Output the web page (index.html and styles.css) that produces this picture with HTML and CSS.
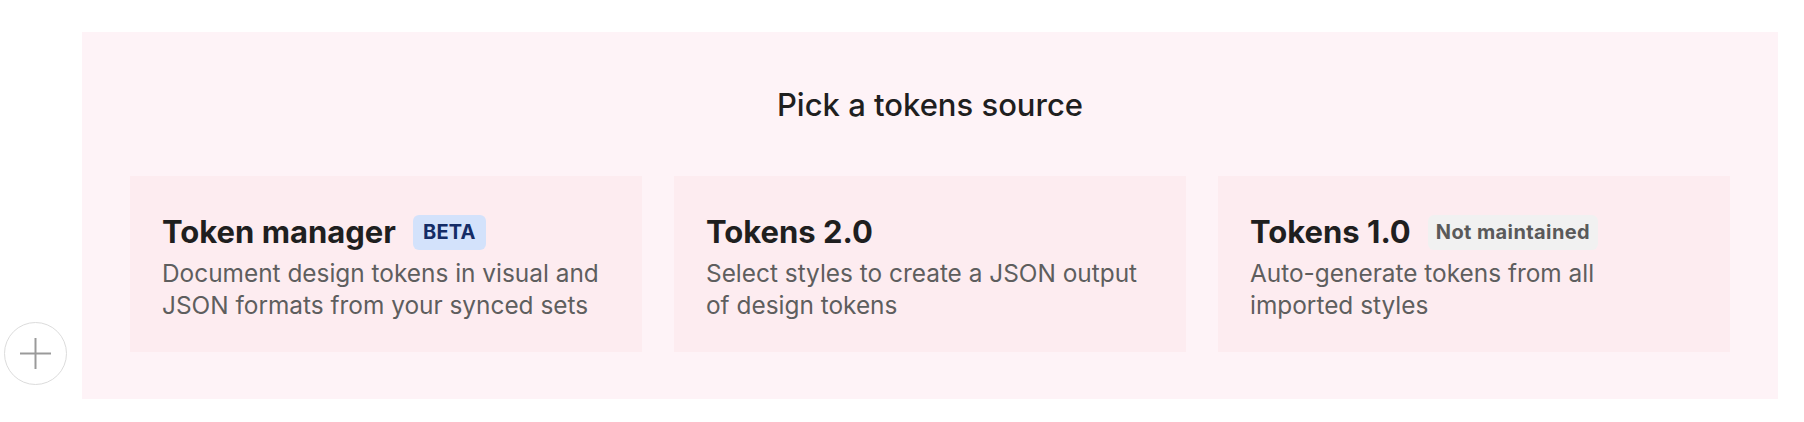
FILE: index.html
```html
<!DOCTYPE html>
<html lang="en">
<head>
    <meta charset="UTF-8">
    <meta name="viewport" content="width=device-width, initial-scale=1.0">
    <title>Pick a tokens source</title>
    <link rel="stylesheet" href="styles.css">
</head>
<body>
    <div class="page">
        <div class="gutter">
            <button class="add-block" title="Add block">
                <svg width="31" height="31" viewBox="0 0 31 31">
                    <line x1="15.5" y1="0" x2="15.5" y2="31" stroke="#9a9a9a" stroke-width="2"/>
                    <line x1="0" y1="15.5" x2="31" y2="15.5" stroke="#9a9a9a" stroke-width="2"/>
                </svg>
            </button>
        </div>

        <section class="picker">
            <h2>Pick a tokens source</h2>

            <div class="sources">
                <div class="source-card">
                    <div class="source-title">
                        <span>Token manager</span>
                        <span class="badge beta">BETA</span>
                    </div>
                    <p>Document design tokens in visual and JSON formats from your synced sets</p>
                </div>

                <div class="source-card">
                    <div class="source-title">
                        <span>Tokens 2.0</span>
                    </div>
                    <p>Select styles to create a JSON output of design tokens</p>
                </div>

                <div class="source-card">
                    <div class="source-title">
                        <span>Tokens 1.0</span>
                        <span class="badge legacy">Not maintained</span>
                    </div>
                    <p>Auto-generate tokens from all imported styles</p>
                </div>
            </div>
        </section>
    </div>
</body>
</html>
```

FILE: styles.css
```css
body {
    margin: 0;
    font-family: Inter, "Noto Sans", sans-serif;
    background: white;
    color: #1f1f1f;
}
.page {
    display: flex;
    padding-top: 32px;
}
.gutter {
    width: 82px;
    flex: none;
    display: flex;
    align-items: flex-end;
}
.add-block {
    width: 63px;
    height: 63px;
    margin: 0 0 14px 4px;
    padding: 0;
    border: 1.5px solid #dcdcdc;
    border-radius: 50%;
    background: white;
    display: flex;
    align-items: center;
    justify-content: center;
    cursor: pointer;
}
.picker {
    width: 1696px;
    height: 367px;
    box-sizing: border-box;
    padding: 55px 48px 0;
    background: #fef3f7;
}
.picker h2 {
    margin: 0 0 53px;
    font-size: 31px;
    line-height: 36px;
    font-weight: 500;
    text-align: center;
    color: #1f1f1f;
}
.sources {
    display: grid;
    grid-template-columns: repeat(3, 1fr);
    gap: 32px;
}
.source-card {
    height: 176px;
    box-sizing: border-box;
    padding: 38px 32px 0;
    background: #fdecf0;
}
.source-title {
    display: flex;
    align-items: center;
    gap: 17px;
    height: 36px;
    font-size: 31px;
    line-height: 36px;
    font-weight: 700;
    color: #1f1f1f;
}
.badge {
    height: 35px;
    padding: 0 9px;
    border-radius: 6px;
    font-size: 20px;
    line-height: 35px;
    font-weight: 700;
}
.beta {
    padding: 0 10px;
    background: #d3e2fb;
    color: #142c66;
    letter-spacing: 0.2px;
}
.legacy {
    padding: 0 8px;
    background: #f1f1f1;
    color: #5a5a5a;
    letter-spacing: 0.4px;
}
.source-card p {
    max-width: 442px;
    margin: 7px 0 0;
    font-size: 24.4px;
    line-height: 32px;
    color: #5e5e5e;
}
```
